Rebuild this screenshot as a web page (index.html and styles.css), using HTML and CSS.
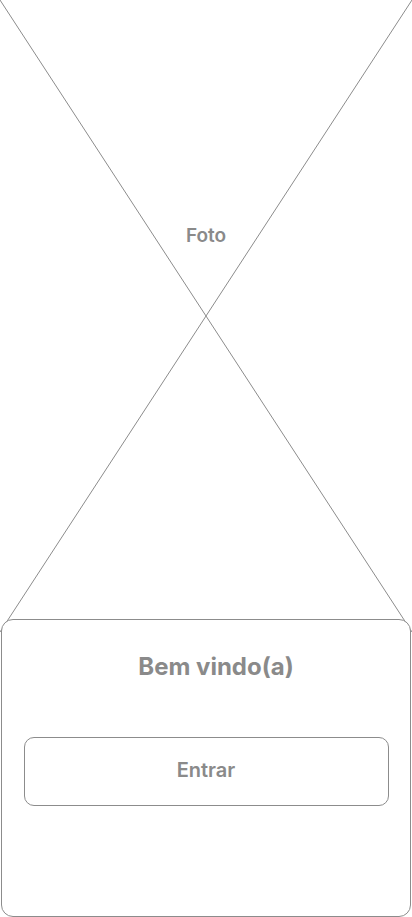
FILE: index.html
```html
<!DOCTYPE html>
<html lang="pt">
<head>
<meta charset="utf-8">
<meta name="viewport" content="width=device-width, initial-scale=1">
<title>Bem vindo</title>
<link rel="stylesheet" href="styles.css">
</head>
<body>
<div class="screen">
  <div class="photo">
    <svg class="photo-x" viewBox="0 0 412 632" preserveAspectRatio="none" aria-hidden="true">
      <line x1="0" y1="0" x2="412" y2="632" />
      <line x1="412" y1="0" x2="0" y2="632" />
    </svg>
    <span class="photo-label">Foto</span>
  </div>
  <div class="card">
    <h1 class="card-title">Bem vindo(a)</h1>
    <button class="btn-enter" type="button">Entrar</button>
  </div>
</div>
</body>
</html>
```
FILE: styles.css
```css
* { box-sizing: border-box; }
html, body {
  margin: 0;
  padding: 0;
  background: #ffffff;
}
body {
  font-family: Inter, "Noto Sans", "Liberation Sans", sans-serif;
  color: #8a8a8a;
}
.screen {
  width: 412px;
  height: 917px;
  overflow: hidden;
  display: flex;
  flex-direction: column;
}
.photo {
  position: relative;
  height: 632px;
  flex: none;
  display: flex;
  justify-content: center;
  padding-top: 224px;
}
.photo-x {
  position: absolute;
  inset: 0;
  width: 100%;
  height: 100%;
}
.photo-x line {
  stroke: #8c8c8c;
  stroke-width: 1;
}
.photo-label {
  position: relative;
  font-size: 19px;
  font-weight: 600;
  line-height: 24px;
  height: 24px;
  color: #8a8a8a;
}
.card {
  position: relative;
  margin: -13px 1px 0 1px;
  width: 410px;
  height: 298px;
  flex: none;
  background: #ffffff;
  border: 1px solid #8c8c8c;
  border-radius: 12px;
  display: flex;
  flex-direction: column;
  align-items: center;
  padding-top: 32px;
}
.card-title {
  margin: 0;
  padding-left: 20px;
  font-size: 24px;
  font-weight: 700;
  line-height: 30px;
  color: #8a8a8a;
}
.btn-enter {
  margin-top: 55px;
  width: 365px;
  height: 69px;
  border: 1px solid #8c8c8c;
  border-radius: 10px;
  background: #ffffff;
  font-family: inherit;
  font-size: 20px;
  font-weight: 600;
  color: #8a8a8a;
  padding: 0 0 3px 0;
}
```
